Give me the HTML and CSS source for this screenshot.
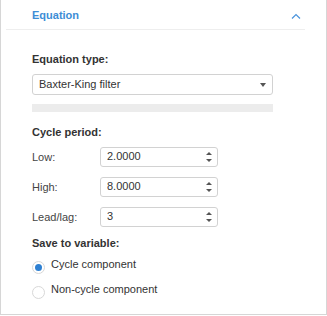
FILE: index.html
```html
<!DOCTYPE html>
<html>
<head>
<meta charset="utf-8">
<link rel="stylesheet" href="styles.css">
</head>
<body>
<div class="panel">
  <div class="header">
    <span class="title">Equation</span>
    <svg class="chev" width="10" height="6" viewBox="0 0 10 6"><path d="M1 5.5 L5 1.5 L9 5.5" fill="none" stroke="#4a94dc" stroke-width="1.2"/></svg>
  </div>
  <div class="body">
    <div class="label">Equation type:</div>
    <div class="select">
      <span>Baxter-King filter</span>
      <span class="caret"></span>
    </div>
    <div class="bar"></div>
    <div class="label cycle">Cycle period:</div>
    <div class="rows">
      <div class="row"><span class="rl">Low:</span><div class="spin"><span>2.0000</span><span class="arrows"><i class="up"></i><i class="down"></i></span></div></div>
      <div class="row"><span class="rl">High:</span><div class="spin"><span>8.0000</span><span class="arrows"><i class="up"></i><i class="down"></i></span></div></div>
      <div class="row"><span class="rl">Lead/lag:</span><div class="spin"><span>3</span><span class="arrows"><i class="up"></i><i class="down"></i></span></div></div>
    </div>
    <div class="label save">Save to variable:</div>
    <div class="radios">
      <div class="radio"><span class="dot on"></span><span>Cycle component</span></div>
      <div class="radio"><span class="dot"></span><span>Non-cycle component</span></div>
    </div>
  </div>
</div>
</body>
</html>
```
FILE: styles.css
```css
html, body {
  margin: 0;
  padding: 0;
  background: #fff;
}
body {
  font-family: "Liberation Sans", Arial, sans-serif;
  font-size: 11px;
  line-height: 13px;
  color: #333;
}
.panel {
  box-sizing: border-box;
  width: 327px;
  height: 315px;
  border: 1px solid #d6d6d6;
  border-top: none;
}
.header {
  margin-left: 5px;
  width: 299px;
  box-sizing: border-box;
  padding: 9px 4px 7px 26px;
  border-bottom: 1px solid #eeeeee;
  display: flex;
  align-items: center;
  justify-content: space-between;
}
.title {
  color: #3d8dd6;
  font-weight: bold;
}
.chev {
  display: block;
  margin-top: 1px;
}
.body {
  padding: 23px 0 0 31px;
}
.label {
  font-weight: bold;
  color: #333;
}
.select {
  margin-top: 8px;
  width: 241px;
  height: 21px;
  box-sizing: border-box;
  border: 1px solid #d2d2d2;
  border-radius: 3px;
  padding: 0 0 0 6px;
  line-height: 19px;
  display: flex;
  align-items: center;
  justify-content: space-between;
}
.select span:first-child {
  line-height: 19px;
}
.caret {
  width: 0;
  height: 0;
  border-left: 3.5px solid transparent;
  border-right: 3.5px solid transparent;
  border-top: 4px solid #555;
  margin-right: 6px;
}
.bar {
  margin-top: 9px;
  width: 241px;
  height: 8px;
  background: #ececec;
}
.cycle {
  margin-top: 14px;
}
.rows {
  margin-top: 8px;
  display: flex;
  flex-direction: column;
  gap: 10px;
}
.row {
  display: flex;
  align-items: center;
}
.rl {
  width: 68px;
  color: #444;
}
.spin {
  box-sizing: border-box;
  width: 118px;
  height: 20px;
  border: 1px solid #d2d2d2;
  border-radius: 3px;
  padding: 0 0 1px 6px;
  display: flex;
  align-items: center;
  justify-content: space-between;
  color: #333;
}
.arrows {
  display: flex;
  flex-direction: column;
  justify-content: space-between;
  height: 10px;
  margin-right: 5px;
}
.arrows i {
  display: block;
  width: 0;
  height: 0;
  border-left: 3px solid transparent;
  border-right: 3px solid transparent;
}
.arrows .up {
  border-bottom: 3px solid #555;
}
.arrows .down {
  border-top: 3px solid #555;
}
.save {
  margin-top: 10px;
}
.radios {
  margin-top: 8px;
  display: flex;
  flex-direction: column;
  gap: 9px;
}
.radio {
  display: flex;
  align-items: flex-start;
  gap: 6px;
  color: #333;
}
.dot {
  box-sizing: border-box;
  width: 13px;
  height: 13px;
  border: 1px solid #d8d8d8;
  border-radius: 50%;
  margin-top: 3px;
  position: relative;
  background: #fff;
}
.dot.on::after {
  content: "";
  position: absolute;
  left: 2px;
  top: 2px;
  width: 7px;
  height: 7px;
  border-radius: 50%;
  background: #2e80d2;
}
```
